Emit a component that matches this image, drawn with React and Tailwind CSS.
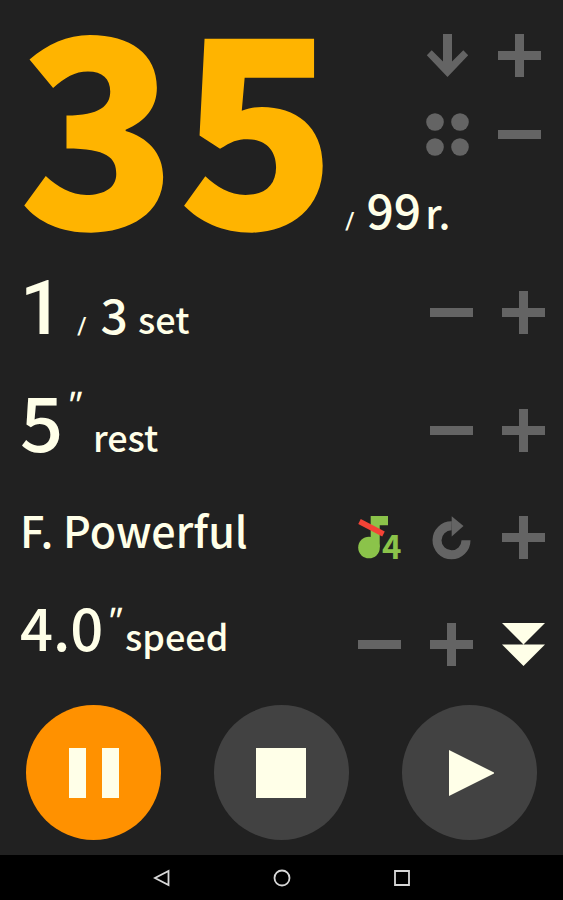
import React from 'react';

function IconButton({ label, className = 'h-16', children }) {
  return (
    <button type="button" aria-label={label} className={`flex w-[72px] shrink-0 items-center justify-center text-[#646464] ${className}`}>
      <svg width="43" height="43" viewBox="0 0 43 43" fill="currentColor" className="overflow-visible" aria-hidden="true">
        {children}
      </svg>
    </button>
  );
}

function Plus({ label, className }) {
  return (
    <IconButton label={label} className={className}>
      <path d="M17 0h9v17h17v9H26v17h-9V26H0v-9h17z" />
    </IconButton>
  );
}

function Minus({ label, className }) {
  return (
    <IconButton label={label} className={className}>
      <path d="M0 17h43v9H0z" />
    </IconButton>
  );
}

function Slash() {
  return <span className="font-['Roboto',sans-serif] text-2xl leading-none">/</span>;
}

function Seconds() {
  return <span className="mt-1.5 self-start text-[30px] italic">"</span>;
}

function Row({ className, children, controls }) {
  return (
    <div className={`flex items-center justify-between pr-1 pl-5 ${className}`}>
      {children}
      <div className="flex">{controls}</div>
    </div>
  );
}

function RoundButton({ label, className, children }) {
  return (
    <button type="button" aria-label={label} className={`flex size-[135px] items-center justify-center rounded-full text-[#ffffe8] ${className}`}>
      <svg width="50" height="50" viewBox="0 0 50 50" fill="currentColor" aria-hidden="true">
        {children}
      </svg>
    </button>
  );
}

function NavButton({ label, children }) {
  return (
    <button type="button" aria-label={label} className="flex w-[120px] items-center justify-center">
      <svg width="18" height="18" viewBox="0 0 18 18" fill="none" stroke="#d8d8d8" strokeWidth="1.8" aria-hidden="true">
        {children}
      </svg>
    </button>
  );
}

export default function App() {
  return (
    <div className="flex min-h-screen flex-col justify-between bg-[#212121] font-['Noto_Sans_CJK_JP',sans-serif] font-medium text-[#ffffe8]">
      <main>
        <header className="flex pb-5 pl-[18px]">
          <h1 className="text-[262px] leading-[230px] font-black text-[#ffb400]">35</h1>
          <div className="flex flex-1 flex-col pt-4">
            <div className="grid grid-cols-[72px_72px] justify-end pr-2">
              <IconButton label="Count down" className="h-[79px]">
                <path d="M17 0h9v27.5L37.3 16.3l4.9 5L21.5 43 .8 21.3l4.9-5L17 27.5z" />
              </IconButton>
              <Plus label="More reps" className="h-[79px]" />
              <IconButton label="Presets" className="h-[79px]">
                <circle cx="9" cy="9" r="8.8" />
                <circle cx="34" cy="9" r="8.8" />
                <circle cx="9" cy="34" r="8.8" />
                <circle cx="34" cy="34" r="8.8" />
              </IconButton>
              <Minus label="Fewer reps" className="h-[79px]" />
            </div>
            <p className="mt-[10px] flex items-baseline pl-2 leading-none">
              <Slash />
              <span className="pl-3 text-[48px]">99</span>
              <span className="pl-1 text-[40px]">r.</span>
            </p>
          </div>
        </header>

        <Row
          className="py-[17px]"
          controls={
            <>
              <Minus label="Fewer sets" />
              <Plus label="More sets" />
            </>
          }
        >
          <p className="flex items-baseline pb-2 leading-none">
            <span className="font-['Roboto',sans-serif] text-[76px]">1</span>
            <span className="px-[14px]">
              <Slash />
            </span>
            <span className="text-[48px]">3</span>
            <span className="pl-[10px] text-[36px]">set</span>
          </p>
        </Row>

        <Row
          className="py-[10px]"
          controls={
            <>
              <Minus label="Less rest" />
              <Plus label="More rest" />
            </>
          }
        >
          <p className="flex items-baseline pb-[22px] leading-none">
            <span className="text-[76px]">5</span>
            <Seconds />
            <span className="pl-[14px] text-[36px]">rest</span>
          </p>
        </Row>

        <Row
          className="py-4"
          controls={
            <>
              <IconButton label="Sound 4 off">
                <g fill="#8bc34a">
                  <path d="M12.7 0H30v9.3h-8.3V31h-9z" />
                  <circle cx="11" cy="31.5" r="10.8" />
                  <text x="24" y="43" fontSize="33" fontWeight="700">
                    4
                  </text>
                </g>
                <path d="M1.5 5.5l24 12.5" stroke="#f44336" strokeWidth="5.5" />
              </IconButton>
              <IconButton label="Repeat">
                <path d="M21.7 9.8A14.5 14.5 0 1 0 36 24.3" fill="none" stroke="currentColor" strokeWidth="9" />
                <path d="M21.7 .3L33.5 10 21.7 20.5z" />
              </IconButton>
              <Plus label="Next program" />
            </>
          }
        >
          <p className="pb-4 text-[43px] leading-[48px]">F. Powerful</p>
        </Row>

        <Row
          className="pt-3 pb-[10px]"
          controls={
            <>
              <Minus label="Slower" />
              <Plus label="Faster" />
              <IconButton label="More settings">
                <path d="M0 0h43L21.5 21.5zM0 21.5h43L21.5 43z" fill="#ffffe8" />
              </IconButton>
            </>
          }
        >
          <p className="flex items-baseline pb-9 leading-none">
            <span className="text-[58px]">4.0</span>
            <Seconds />
            <span className="pl-[6px] text-[36px]">speed</span>
          </p>
        </Row>

        <div className="grid grid-cols-3 justify-items-center pt-1 pb-[15px]">
          <RoundButton label="Pause" className="bg-[#ff9100]">
            <path d="M0 0h17v50H0zM33 0h17v50H33z" />
          </RoundButton>
          <RoundButton label="Stop" className="bg-[#424242]">
            <path d="M0 0h50v50H0z" />
          </RoundButton>
          <RoundButton label="Start" className="bg-[#424242]">
            <path d="M5 2l46 23L5 48z" />
          </RoundButton>
        </div>
      </main>

      <nav aria-label="System" className="flex h-[45px] justify-center bg-black">
        <NavButton label="Back">
          <path d="M15.5 2v14L2 9z" />
        </NavButton>
        <NavButton label="Home">
          <circle cx="9" cy="9" r="7.5" />
        </NavButton>
        <NavButton label="Recent apps">
          <path d="M2 2h14v14H2z" />
        </NavButton>
      </nav>
    </div>
  );
}
